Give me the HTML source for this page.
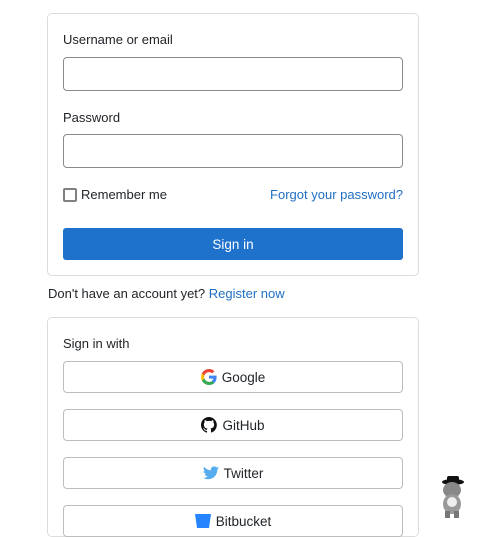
<!DOCTYPE html>
<html><head><style>
*{box-sizing:border-box;margin:0;padding:0}
body{width:480px;height:520px;overflow:hidden;background:#fff;font-family:"Liberation Sans",sans-serif;font-size:13px;color:#212529;position:relative}
.card{position:absolute;left:47px;width:372px;border:1px solid #dcdcdc;border-radius:5px;background:#fff}
.abs{position:absolute}
.inp{position:absolute;left:15px;width:340px;height:34px;border:1px solid #8a8a8a;border-radius:4px}
.lbl{position:absolute;left:15px;font-size:13px}
.btn{position:absolute;left:15px;width:340px;height:32px;border:1px solid #bdbdbd;border-radius:4px;display:flex;align-items:center;justify-content:center;gap:5px;font-size:13.5px}
a{color:#1f6fc5;text-decoration:none}
</style></head><body>
<div class="card" style="top:13px;height:263px">
  <div class="lbl" style="top:18px">Username or email</div>
  <div class="inp" style="top:43px"></div>
  <div class="lbl" style="top:96px">Password</div>
  <div class="inp" style="top:120px"></div>
  <div class="abs" style="left:15px;top:174px;width:14px;height:14px;border:2px solid #808080;border-radius:2px"></div>
  <div class="abs" style="left:33px;top:173px">Remember me</div>
  <div class="abs" style="right:15px;top:173px"><a>Forgot your password?</a></div>
  <div class="abs" style="left:15px;top:214px;width:340px;height:32px;background:#1f72cc;border-radius:3px;color:#fff;display:flex;align-items:center;justify-content:center;font-size:13.5px">Sign in</div>
</div>
<div class="abs" style="left:48px;top:286px">Don't have an account yet? <a>Register now</a></div>
<div class="card" style="top:317px;height:220px">
  <div class="lbl" style="top:18px">Sign in with</div>
  <div class="btn" style="top:43px"><svg width="16" height="16" viewBox="0 0 48 48"><path fill="#EA4335" d="M24 9.5c3.5 0 6.7 1.2 9.2 3.6l6.9-6.9C35.9 2.4 30.5 0 24 0 14.6 0 6.6 5.4 2.6 13.2l8 6.2C12.5 13.7 17.8 9.5 24 9.5z"/><path fill="#4285F4" d="M46.9 24.5c0-1.6-.1-3.1-.4-4.5H24v9h12.9c-.6 3-2.3 5.5-4.8 7.2l7.7 6c4.5-4.2 7.1-10.3 7.1-17.7z"/><path fill="#FBBC05" d="M10.5 28.6c-.5-1.5-.8-3-.8-4.6s.3-3.2.8-4.6l-8-6.2C.9 16.5 0 20.1 0 24s.9 7.5 2.6 10.8l7.9-6.2z"/><path fill="#34A853" d="M24 48c6.5 0 11.9-2.1 15.9-5.8l-7.7-6c-2.2 1.5-5 2.3-8.2 2.3-6.2 0-11.5-4.2-13.4-9.9l-8 6.2C6.6 42.6 14.6 48 24 48z"/></svg>Google</div>
  <div class="btn" style="top:91px"><svg width="16" height="16" viewBox="0 0 16 16"><path fill="#111" d="M8 0a8 8 0 0 0-2.5 15.6c.4.1.5-.2.5-.4v-1.4c-2.2.5-2.7-1-2.7-1-.4-.9-.9-1.2-.9-1.2-.7-.5.1-.5.1-.5.8.1 1.2.8 1.2.8.7 1.3 1.9.9 2.3.7.1-.5.3-.9.5-1.1-1.8-.2-3.6-.9-3.6-4 0-.9.3-1.6.8-2.1-.1-.2-.4-1 .1-2.1 0 0 .7-.2 2.2.8a7.5 7.5 0 0 1 4 0c1.5-1 2.2-.8 2.2-.8.4 1.1.2 1.9.1 2.1.5.6.8 1.3.8 2.1 0 3.1-1.9 3.7-3.6 3.9.3.3.5.8.5 1.5v2.2c0 .2.1.5.6.4A8 8 0 0 0 8 0z"/></svg>GitHub</div>
  <div class="btn" style="top:139px"><svg width="16" height="14" viewBox="0 0 24 20"><path fill="#55acee" d="M24 2.4c-.9.4-1.8.6-2.8.8 1-.6 1.8-1.6 2.2-2.7-1 .6-2 1-3.1 1.2A4.9 4.9 0 0 0 11.9 6 14 14 0 0 1 1.7.9a4.9 4.9 0 0 0 1.5 6.6c-.8 0-1.6-.3-2.2-.6 0 2.4 1.7 4.4 3.9 4.8-.7.2-1.5.2-2.2.1.6 2 2.4 3.4 4.6 3.4A9.9 9.9 0 0 1 0 17.2 14 14 0 0 0 7.5 19.4c9.1 0 14-7.5 14-14v-.6c1-.7 1.8-1.6 2.5-2.4z"/></svg>Twitter</div>
  <div class="btn" style="top:187px"><svg width="16" height="14" viewBox="0 0 16 14"><path fill="#2684ff" d="M0 0h16l-2 14H2z"/></svg>Bitbucket</div>
</div>
<svg class="abs" style="left:438px;top:476px" width="30" height="42" viewBox="0 0 30 42"><ellipse cx="15" cy="6" rx="11" ry="3" fill="#111"/><rect x="9" y="0" width="12" height="6" rx="2" fill="#111"/><ellipse cx="14" cy="14" rx="9" ry="8" fill="#888"/><ellipse cx="14" cy="28" rx="9" ry="10" fill="#999"/><circle cx="14" cy="26" r="5" fill="#eee"/><rect x="7" y="35" width="5" height="7" fill="#777"/><rect x="16" y="35" width="5" height="7" fill="#777"/></svg>
</body></html>
